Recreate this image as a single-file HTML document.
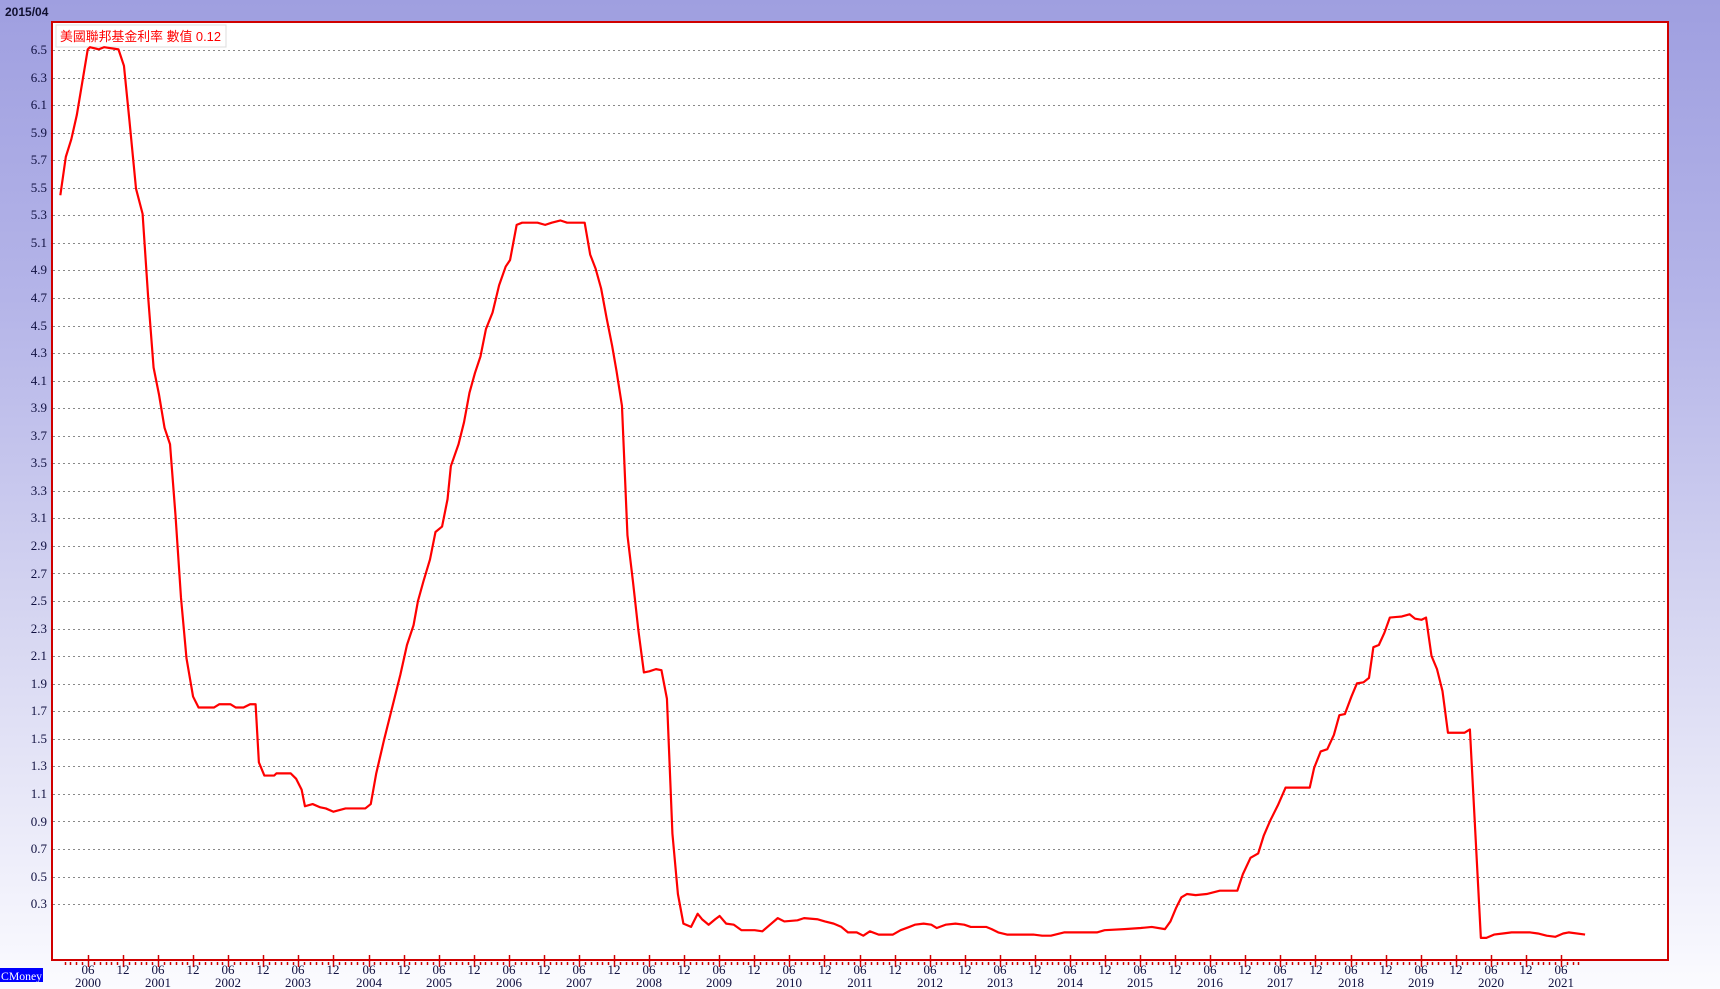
<!DOCTYPE html>
<html><head><meta charset="utf-8">
<style>
html,body{margin:0;padding:0;width:1720px;height:989px;overflow:hidden;}
body{background:linear-gradient(180deg,#9f9fe0 0%,#b4b4e8 30%,#d8d8f2 65%,#fbfbff 100%);font-family:"Liberation Serif","Noto Serif CJK SC",serif;position:relative;}
svg{position:absolute;left:0;top:0;}
.yl{font-size:13px;fill:#101040;text-anchor:end;}
.xl{font-size:13px;fill:#101040;text-anchor:middle;}
</style></head><body>
<svg width="1720" height="989" viewBox="0 0 1720 989">
<text x="5" y="16" style="font-family:'Liberation Sans',sans-serif;font-weight:bold;font-size:12px;fill:#101030">2015/04</text>
<rect x="52" y="22" width="1616" height="938" fill="#fff"/>
<g id="grid" stroke="#888" stroke-width="1" stroke-dasharray="2,3"></g>
<rect x="52" y="22" width="1616" height="938" fill="none" stroke="#d00000" stroke-width="2"/>
<g id="ticks" stroke="#d00000" stroke-width="1.5"></g>
<rect x="56" y="25" width="170" height="22" fill="#fff" stroke="#ddd"/>
<text x="60" y="41" style="font-family:'Liberation Sans','Noto Sans CJK TC',sans-serif;font-size:13px;fill:#ff0000" textLength="161" lengthAdjust="spacingAndGlyphs">美國聯邦基金利率 數值 0.12</text>
<g class="yl">
<text x="47" y="54">6.5</text><text x="47" y="82">6.3</text><text x="47" y="109">6.1</text><text x="47" y="137">5.9</text><text x="47" y="164">5.7</text><text x="47" y="192">5.5</text><text x="47" y="219">5.3</text><text x="47" y="247">5.1</text><text x="47" y="274">4.9</text><text x="47" y="302">4.7</text><text x="47" y="330">4.5</text><text x="47" y="357">4.3</text><text x="47" y="385">4.1</text><text x="47" y="412">3.9</text><text x="47" y="440">3.7</text><text x="47" y="467">3.5</text><text x="47" y="495">3.3</text><text x="47" y="522">3.1</text><text x="47" y="550">2.9</text><text x="47" y="578">2.7</text><text x="47" y="605">2.5</text><text x="47" y="633">2.3</text><text x="47" y="660">2.1</text><text x="47" y="688">1.9</text><text x="47" y="715">1.7</text><text x="47" y="743">1.5</text><text x="47" y="770">1.3</text><text x="47" y="798">1.1</text><text x="47" y="826">0.9</text><text x="47" y="853">0.7</text><text x="47" y="881">0.5</text><text x="47" y="908">0.3</text>
</g>
<g class="xl">
<text x="88" y="974">06</text><text x="123" y="974">12</text><text x="158" y="974">06</text><text x="193" y="974">12</text><text x="228" y="974">06</text><text x="263" y="974">12</text><text x="298" y="974">06</text><text x="333" y="974">12</text><text x="369" y="974">06</text><text x="404" y="974">12</text><text x="439" y="974">06</text><text x="474" y="974">12</text><text x="509" y="974">06</text><text x="544" y="974">12</text><text x="579" y="974">06</text><text x="614" y="974">12</text><text x="649" y="974">06</text><text x="684" y="974">12</text><text x="719" y="974">06</text><text x="754" y="974">12</text><text x="789" y="974">06</text><text x="825" y="974">12</text><text x="860" y="974">06</text><text x="895" y="974">12</text><text x="930" y="974">06</text><text x="965" y="974">12</text><text x="1000" y="974">06</text><text x="1035" y="974">12</text><text x="1070" y="974">06</text><text x="1105" y="974">12</text><text x="1140" y="974">06</text><text x="1175" y="974">12</text><text x="1210" y="974">06</text><text x="1245" y="974">12</text><text x="1280" y="974">06</text><text x="1316" y="974">12</text><text x="1351" y="974">06</text><text x="1386" y="974">12</text><text x="1421" y="974">06</text><text x="1456" y="974">12</text><text x="1491" y="974">06</text><text x="1526" y="974">12</text><text x="1561" y="974">06</text>
<text x="88" y="987">2000</text><text x="158" y="987">2001</text><text x="228" y="987">2002</text><text x="298" y="987">2003</text><text x="369" y="987">2004</text><text x="439" y="987">2005</text><text x="509" y="987">2006</text><text x="579" y="987">2007</text><text x="649" y="987">2008</text><text x="719" y="987">2009</text><text x="789" y="987">2010</text><text x="860" y="987">2011</text><text x="930" y="987">2012</text><text x="1000" y="987">2013</text><text x="1070" y="987">2014</text><text x="1140" y="987">2015</text><text x="1210" y="987">2016</text><text x="1280" y="987">2017</text><text x="1351" y="987">2018</text><text x="1421" y="987">2019</text><text x="1491" y="987">2020</text><text x="1561" y="987">2021</text>
</g>
<rect x="0" y="968" width="43" height="14" fill="#0000ff"/>
<text x="1" y="980" style="font-size:12px;fill:#fff" textLength="41" lengthAdjust="spacingAndGlyphs">CMoney</text>
<g transform="scale(1.09694)">
<polyline fill="none" stroke="#ff0000" stroke-width="2" stroke-linejoin="round" points="55,178 60,143 65,127 70,105 75,75 80,45 82,43 90,45 95,43 108,45 113,60 118,110 124,172 130,195 135,270 140,335 145,360 150,390 155,405 160,470 165,545 170,600 176,635 181,645 195,645 200,642 210,642 215,645 222,645 228,642 233,642 236,695 241,707 250,707 252,705 265,705 270,710 275,720 278,735 285,733 292,736 297,737 304,740 315,737 322,737 333,737 338,733 343,705 350,675 355,655 360,635 365,615 371,588 377,570 381,548 386,530 392,510 397,485 403,480 408,455 411,425 418,405 423,385 428,358 433,340 438,325 443,300 449,285 455,260 461,243 465,237 471,205 476,203 490,203 497,205 503,203 511,201 517,203 533,203 538,232 543,245 548,263 553,290 558,315 562,338 567,370 572,488 577,530 582,575 587,613 592,612 598,610 603,611 608,637 613,760 618,815 623,842 630,845 636,833 640,838 646,843 652,838 656,835 662,842 669,843 676,848 688,848 695,849 702,843 709,837 715,840 727,839 733,837 745,838 752,840 760,842 767,845 773,850 781,850 787,853 793,849 801,852 808,852 814,852 821,848 829,845 834,843 842,842 849,843 854,846 862,843 871,842 879,843 885,845 899,845 904,847 910,850 918,852 942,852 950,853 958,853 970,850 1000,850 1007,848 1025,847 1040,846 1050,845 1062,847 1067,840 1072,828 1077,818 1082,815 1090,816 1100,815 1112,812 1128,812 1133,797 1140,782 1147,778 1152,762 1158,748 1165,734 1172,718 1194,718 1198,700 1204,685 1210,683 1216,670 1221,652 1226,651 1232,635 1237,623 1243,622 1248,618 1252,590 1257,588 1262,577 1267,563 1278,562 1285,560 1290,564 1296,565 1300,563 1305,598 1310,610 1315,630 1320,668 1325,668 1335,668 1340,665 1345,760 1350,855 1355,855 1362,852 1370,851 1378,850 1395,850 1402,851 1410,853 1418,854 1425,851 1430,850 1445,852"/>
</g>
</svg>
<script>
(function(){
var ns="http://www.w3.org/2000/svg";
var g=document.getElementById("grid");
for(var i=0;i<32;i++){var y=Math.round(50+27.55*i)+0.5;var l=document.createElementNS(ns,"line");
l.setAttribute("x1",53);l.setAttribute("x2",1667);l.setAttribute("y1",y);l.setAttribute("y2",y);g.appendChild(l);}
var t=document.getElementById("ticks");
for(var m=1;m<=260;m++){var x=Math.round(88+(m-5)*5.845)+0.5;var big=(m%6==5);
var l=document.createElementNS(ns,"line");l.setAttribute("x1",x);l.setAttribute("x2",x);
l.setAttribute("y1",big?955:962);l.setAttribute("y2",big?967:965);t.appendChild(l);}
})();
</script>
</body></html>
